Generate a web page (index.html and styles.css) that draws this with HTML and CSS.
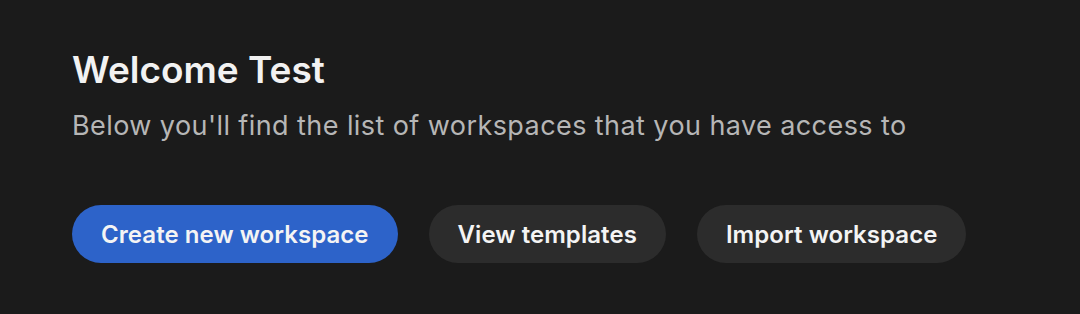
FILE: index.html
```html
<!DOCTYPE html>
<html lang="en">
<head>
<meta charset="utf-8">
<title>Welcome</title>
<link rel="stylesheet" href="styles.css">
</head>
<body>
<main class="welcome">
  <h1 class="welcome-title">Welcome Test</h1>
  <p class="welcome-subtitle">Below you'll find the list of workspaces that you have access to</p>
  <div class="actions">
    <button class="btn btn-primary">Create new workspace</button>
    <button class="btn btn-secondary">View templates</button>
    <button class="btn btn-secondary">Import workspace</button>
  </div>
</main>
</body>
</html>
```

FILE: styles.css
```css
html, body {
  margin: 0;
  padding: 0;
  background: #1b1b1b;
  font-family: Inter, "Noto Sans", sans-serif;
}
.welcome {
  padding: 48px 72px 0;
}
.welcome-title {
  margin: 0;
  font-size: 37px;
  line-height: 44px;
  font-weight: 600;
  color: #f2f2f2;
}
.welcome-subtitle {
  margin: 18px 0 0;
  font-size: 27px;
  line-height: 32px;
  letter-spacing: 0.42px;
  font-weight: 400;
  color: #b6b6b6;
}
.actions {
  display: flex;
  gap: 31px;
  margin-top: 63px;
}
.btn {
  height: 58px;
  padding: 0 29px;
  border: none;
  border-radius: 29px;
  font-family: inherit;
  font-size: 24px;
  letter-spacing: 0.06px;
  font-weight: 600;
  color: #f4f4f4;
}
.btn-primary {
  background: #2d63c9;
}
.btn-secondary {
  background: #2c2c2c;
}
```
